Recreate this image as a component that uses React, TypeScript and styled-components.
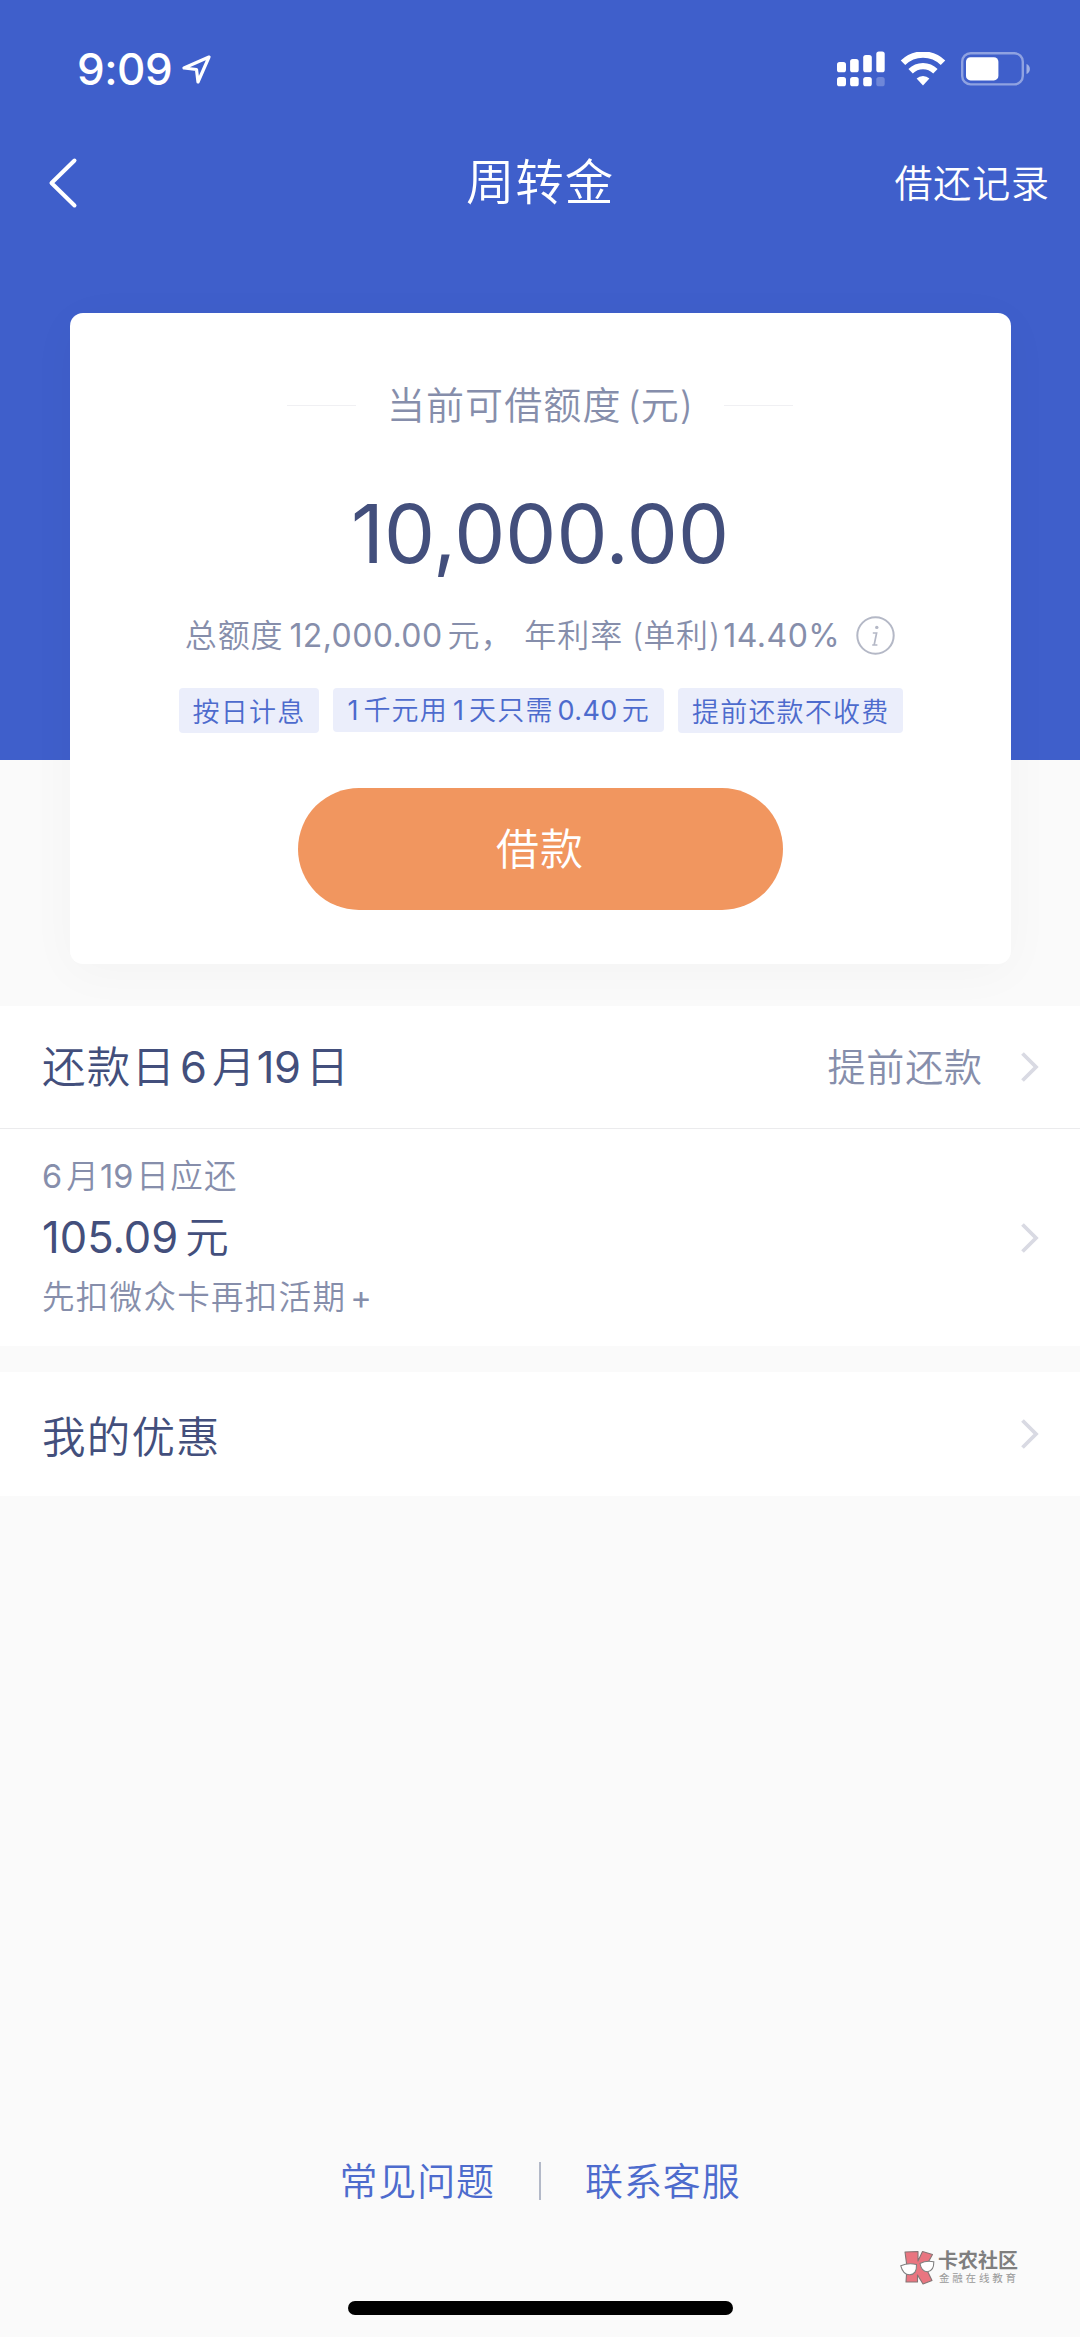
import React from 'react';
import styled, { createGlobalStyle } from 'styled-components';

const BLUE = '#3f5fcb';
const INK = '#434f7c';
const MUTED = '#868eab';
const LINK = '#4d6bcd';

const GlobalStyle = createGlobalStyle`
  * { box-sizing: border-box; }
  html, body { margin: 0; padding: 0; }
  body {
    background: #fafafa;
    font-family: Inter, "Noto Sans CJK SC", sans-serif;
    font-weight: 350;
  }
`;

const Page = styled.main`
  position: relative;
  display: flex;
  flex-direction: column;
  width: 1080px;
  height: 2337px;
  overflow: hidden;
  background: #fafafa;
`;

const Hero = styled.header`
  display: flex;
  flex-direction: column;
  height: 1006px;
  flex: none;
  background: linear-gradient(${BLUE} 760px, #fafafa 760px);
  color: #fff;
`;

const StatusBar = styled.div`
  display: flex;
  align-items: center;
  justify-content: space-between;
  height: 138px;
  padding: 0 49px 0 77px;
`;

const StatusGroup = styled.div<{ $gap?: number }>`
  display: flex;
  align-items: center;
  gap: ${p => p.$gap ?? 0}px;
`;

const Clock = styled.span`
  width: 104px;
  font-size: 44px;
  font-weight: 500;
  line-height: 50px;
  letter-spacing: -0.5px;
  white-space: nowrap;
`;

const NavBar = styled.nav`
  display: grid;
  grid-template-columns: 1fr auto 1fr;
  align-items: center;
  height: 90px;
  padding: 0 30px;
`;

const BackButton = styled.button`
  display: flex;
  padding: 0 0 0 18px;
  border: 0;
  background: none;
  color: #fff;
`;

const Title = styled.h1`
  margin: 0;
  font-size: 48.5px;
  font-weight: 350;
  line-height: 60px;
  letter-spacing: 0.8px;
`;

const NavLink = styled.a`
  justify-self: end;
  font-size: 38px;
  line-height: 50px;
  letter-spacing: 0.9px;
`;

const Card = styled.section`
  display: flex;
  flex-direction: column;
  align-items: center;
  width: 941px;
  height: 651px;
  margin: 85px auto 0;
  padding-top: 68px;
  border-radius: 13px;
  background: #fff;
  box-shadow: 0 8px 50px rgba(20, 20, 40, 0.03);
`;

const CardLabel = styled.div`
  display: flex;
  align-items: center;
  gap: 31px;
  color: ${MUTED};
  font-size: 38px;
  line-height: 48px;
  letter-spacing: 1.1px;

  &::before, &::after {
    content: '';
    width: 69px;
    height: 1px;
    background: #f0f0f3;
  }
`;

const Amount = styled.div`
  margin-top: 57px;
  color: ${INK};
  font-size: 81px;
  font-weight: 400;
  line-height: 96px;
`;

const Summary = styled.div`
  display: flex;
  align-items: center;
  margin-top: 34px;
  color: ${MUTED};
  font-size: 32px;
  line-height: 40px;
  letter-spacing: 0.9px;
  white-space: nowrap;
`;

const Num = styled.span<{ $l?: number; $r?: number; $ls?: number; $light?: boolean }>`
  margin-left: ${p => p.$l ?? 0}px;
  margin-right: ${p => p.$r ?? 0}px;
  font-weight: ${p => (p.$light ? 350 : 400)};
  letter-spacing: ${p => p.$ls ?? 0}px;
`;

const Tags = styled.div`
  display: flex;
  align-items: flex-start;
  gap: 14px;
  margin: 32px 0 0 2px;
`;

const Tag = styled.span<{ $short?: boolean }>`
  height: ${p => (p.$short ? 44 : 45)}px;
  padding: 0 14px;
  border-radius: 4px;
  background: #ebeefb;
  color: ${LINK};
  font-size: 27px;
  line-height: ${p => (p.$short ? 45 : 50)}px;
  letter-spacing: 1.2px;
  white-space: nowrap;
`;

const BorrowButton = styled.button`
  width: 485px;
  height: 122px;
  margin-top: 55px;
  padding: 0 0 6px;
  border: 0;
  border-radius: 61px;
  background: #f1965f;
  color: #fff;
  font-family: inherit;
  font-size: 43px;
  font-weight: 350;
  letter-spacing: 1px;
`;

const Panel = styled.section`
  flex: none;
  background: #fff;
  & + & { margin-top: 26px; }
`;

const Row = styled.div<{ $h: number; $divider?: boolean }>`
  display: flex;
  align-items: center;
  justify-content: space-between;
  height: ${p => p.$h}px;
  padding: 0 40px 0 42px;
  border-bottom: ${p => (p.$divider ? '1px solid #ebebed' : '0')};
`;

const RowTitle = styled.h2<{ $drop?: number }>`
  margin: 0;
  padding-top: ${p => p.$drop ?? 0}px;
  color: ${INK};
  font-size: 43.5px;
  font-weight: 350;
  line-height: 56px;
  letter-spacing: 1.2px;
  white-space: nowrap;
`;

const RowAction = styled.span`
  display: flex;
  align-items: center;
  gap: 37px;
  color: ${MUTED};
  font-size: 38px;
  line-height: 48px;
  letter-spacing: 0.9px;
`;

const Bill = styled.div`
  display: flex;
  flex-direction: column;
`;

const BillNote = styled.span`
  color: ${MUTED};
  font-size: 32.5px;
  line-height: 44px;
  letter-spacing: 1.3px;
`;

const BillAmount = styled.span`
  margin: 10px 0 11px;
  color: ${INK};
  font-size: 43.5px;
  font-weight: 350;
  line-height: 56px;
`;

const Spacer = styled.div`
  flex: 1;
`;

const Footer = styled.footer`
  display: flex;
  align-items: center;
  justify-content: center;
  gap: 44px;
  height: 50px;
  margin-bottom: 95px;
  color: ${LINK};
  font-size: 38px;
  line-height: 50px;
  letter-spacing: 0.9px;
`;

const FooterRule = styled.i`
  width: 2px;
  height: 38px;
  background: #b3b9c8;
`;

const HomeIndicator = styled.div`
  flex: none;
  width: 385px;
  height: 14px;
  margin: 0 auto 22px;
  border-radius: 7px;
  background: #000;
`;

const Watermark = styled.div`
  position: absolute;
  left: 900px;
  top: 2249px;
  display: flex;
  align-items: center;
  gap: 2px;
`;

const WatermarkText = styled.div`
  display: flex;
  flex-direction: column;
  color: #7f7f7f;
  white-space: nowrap;
`;

const WatermarkName = styled.b`
  font-size: 20px;
  font-weight: 700;
  line-height: 22px;
`;

const WatermarkSub = styled.span`
  padding-left: 1px;
  color: #999;
  font-size: 10.5px;
  font-weight: 400;
  line-height: 14px;
  letter-spacing: 2.8px;
`;

const LocationIcon = () => (
  <svg width="31" height="31" viewBox="0 0 31 31" fill="none">
    <path d="M28 3 L3 14 L15.5 15.5 L17 28 Z" stroke="#fff" strokeWidth="3.2" strokeLinejoin="round" />
  </svg>
);

const SignalIcon = () => (
  <svg width="48" height="36" viewBox="0 0 48 36" fill="#fff">
    <rect x="0" y="11" width="9" height="10.3" rx="2.6" />
    <rect x="13.1" y="8" width="8.6" height="13.3" rx="2.6" />
    <rect x="26.2" y="4" width="8.6" height="17.3" rx="2.6" />
    <rect x="39.3" y="0.5" width="8.4" height="20.8" rx="2.6" />
    <rect x="0" y="26" width="9" height="9.3" rx="2.6" />
    <rect x="13.1" y="26" width="8.6" height="9.3" rx="2.6" />
    <rect x="26.2" y="26" width="8.6" height="9.3" rx="2.6" />
    <rect x="39.3" y="26" width="8.4" height="9.3" rx="2.6" opacity="0.25" />
  </svg>
);

const WifiIcon = () => (
  <svg width="46" height="34" viewBox="0 0 46 34" fill="none">
    <path d="M3 10.8 A28.5 28.5 0 0 1 43 10.8" stroke="#fff" strokeWidth="6.4" />
    <path d="M10.6 19.2 A17.5 17.5 0 0 1 35.4 19.2" stroke="#fff" strokeWidth="6.2" />
    <path d="M23 33.5 L16.6 26.6 A9 9 0 0 1 29.4 26.6 Z" fill="#fff" />
  </svg>
);

const BatteryIcon = () => (
  <svg width="70" height="34" viewBox="0 0 70 34">
    <rect x="1.2" y="1.2" width="60.6" height="31.2" rx="8.5" fill="none" stroke="#fff" strokeOpacity="0.42" strokeWidth="2.4" />
    <rect x="5" y="5.2" width="32.4" height="23.2" rx="4.5" fill="#fff" />
    <path d="M65.5 12 A5.4 5.4 0 0 1 65.5 22 Z" fill="#fff" fillOpacity="0.5" />
  </svg>
);

const BackIcon = () => (
  <svg width="30" height="52" viewBox="0 0 30 52" fill="none">
    <path d="M26.5 3.5 L3.5 26 L26.5 48.5" stroke="#fff" strokeWidth="4" strokeLinecap="round" strokeLinejoin="round" />
  </svg>
);

const InfoSvg = styled.svg`
  margin-left: 16px;
  margin-top: -2px;
`;

const InfoIcon = () => (
  <InfoSvg width="39" height="39" viewBox="0 0 39 39" fill="none">
    <circle cx="19.5" cy="19.5" r="18.2" stroke="#b4b8c6" strokeWidth="2" />
    <circle cx="20.8" cy="11.4" r="1.7" fill="#b4b8c6" />
    <path d="M16.8 17 H20.6 L18.2 28.6 M16.2 29 H21.4" stroke="#b4b8c6" strokeWidth="1.7" />
  </InfoSvg>
);

const Chevron = () => (
  <svg width="20" height="32" viewBox="0 0 20 32" fill="none">
    <path d="M2.5 2.5 L16 16 L2.5 29.5" stroke="#d9dae3" strokeWidth="3.8" />
  </svg>
);

const WatermarkLogo = () => (
  <svg width="36" height="38" viewBox="0 0 36 38">
    <path
      d="M5 3 L18 2.500 L18 12 L22.500 2.500 L32.500 5.500 L25.500 18 L32 31.500 L23 35 L17.500 26 L17.500 33 L6 33 L7 18 Z"
      fill="#e97580" stroke="#857575" strokeWidth="1.1" strokeLinejoin="round"
    />
    <g fill="#fff" stroke="#808080" strokeWidth="1.1">
      <path d="M0.800 16.800 Q8 13.500 16.500 15.500 Q17 25.500 9.500 25.800 Q3 25.500 0.800 16.800 Z" />
      <path d="M20 14.500 Q26.500 11 33.800 12.800 Q34 22 27.500 22.800 Q21.500 22.800 20 14.500 Z" />
    </g>
  </svg>
);

export default function App() {
  return (
    <>
      <GlobalStyle />
      <Page>
        <Hero>
          <StatusBar>
            <StatusGroup>
              <Clock>9:09</Clock>
              <LocationIcon />
            </StatusGroup>
            <StatusGroup $gap={15}>
              <SignalIcon />
              <WifiIcon />
              <BatteryIcon />
            </StatusGroup>
          </StatusBar>
          <NavBar>
            <BackButton aria-label="返回"><BackIcon /></BackButton>
            <Title>周转金</Title>
            <NavLink>借还记录</NavLink>
          </NavBar>
          <Card>
            <CardLabel><span>当前可借额度<Num $l={6} $light>(</Num>元<Num $light>)</Num></span></CardLabel>
            <Amount>10,000.00</Amount>
            <Summary>
              总额度<Num $l={6} $r={5} $ls={0.4}>12,000.00</Num>元，
              <Num $l={11}> </Num>年利率<Num $l={9} $light>(</Num>单利<Num $light>)</Num><Num $l={3} $ls={0.5}>14.40%</Num>
              <InfoIcon />
            </Summary>
            <Tags>
              <Tag>按日计息</Tag>
              <Tag $short><Num $r={5}>1</Num>千元用<Num $l={5} $r={5}>1</Num>天只需<Num $l={4} $r={4} $ls={0.4}>0.40</Num>元</Tag>
              <Tag>提前还款不收费</Tag>
            </Tags>
            <BorrowButton>借款</BorrowButton>
          </Card>
        </Hero>
        <Panel>
          <Row $h={123} $divider>
            <RowTitle>还款日<Num $l={4} $r={5}>6</Num>月<Num $r={5} $ls={-0.5}>19</Num>日</RowTitle>
            <RowAction>提前还款<Chevron /></RowAction>
          </Row>
          <Row $h={217}>
            <Bill>
              <BillNote><Num $r={4}>6</Num>月<Num $r={3}>19</Num>日应还</BillNote>
              <BillAmount><Num $r={7}>105.09</Num>元</BillAmount>
              <BillNote>先扣微众卡再扣活期<Num $l={4}>+</Num></BillNote>
            </Bill>
            <Chevron />
          </Row>
        </Panel>
        <Panel>
          <Row $h={124}>
            <RowTitle $drop={6}>我的优惠</RowTitle>
            <Chevron />
          </Row>
        </Panel>
        <Spacer />
        <Footer>
          <span>常见问题</span>
          <FooterRule />
          <span>联系客服</span>
        </Footer>
        <HomeIndicator />
        <Watermark>
          <WatermarkLogo />
          <WatermarkText>
            <WatermarkName>卡农社区</WatermarkName>
            <WatermarkSub>金融在线教育</WatermarkSub>
          </WatermarkText>
        </Watermark>
      </Page>
    </>
  );
}
